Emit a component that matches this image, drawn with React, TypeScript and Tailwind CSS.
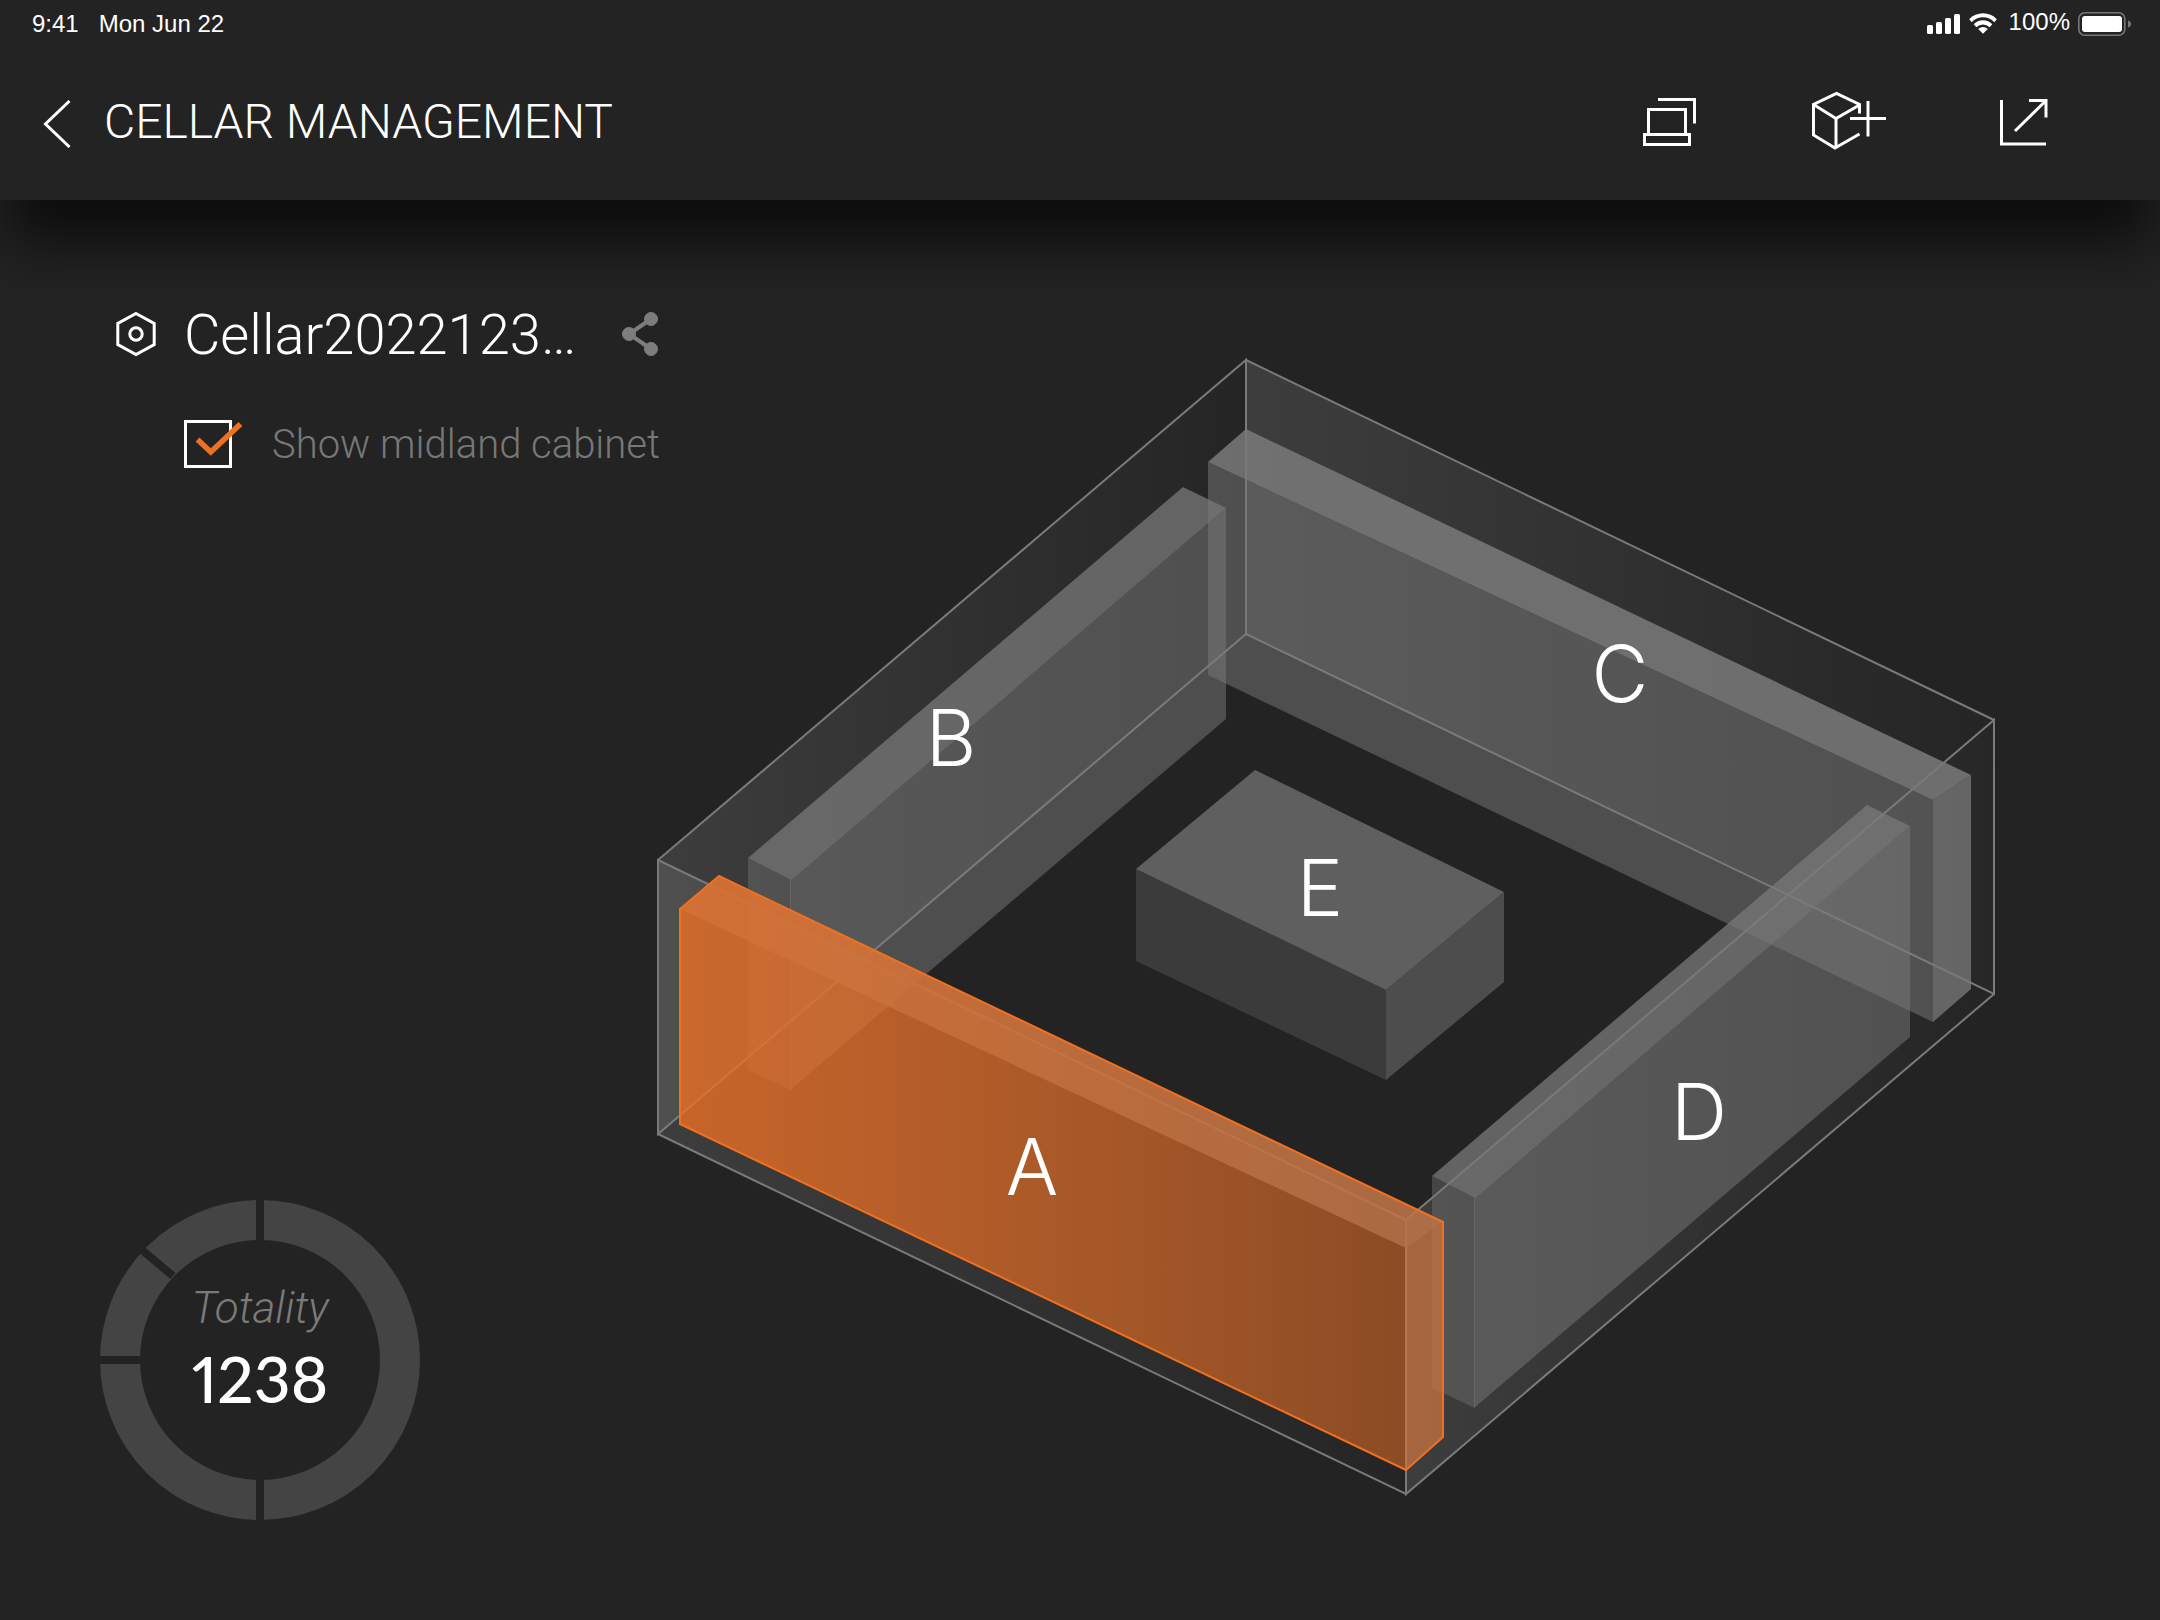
import { useState } from 'react';

type Face = { points: string; opacity: number };

interface Cabinet {
  id: string;
  outline: string;
  faces: Face[];
  label: [number, number];
}

// Drawn back to front
const cabinets: Cabinet[] = [
  {
    id: 'C',
    outline: '1208,462 1246,429 1971,775 1971,989 1933,1022 1208,675',
    faces: [
      { points: '1208,462 1933,800 1933,1022 1208,675', opacity: 0.5 },
      { points: '1208,462 1246,429 1971,775 1933,800', opacity: 0.87 },
      { points: '1933,800 1971,775 1971,989 1933,1022', opacity: 0.76 },
    ],
    label: [1620, 702],
  },
  {
    id: 'B',
    outline: '748,858 1183,487 1226,508 1226,719 791,1090 748,1070',
    faces: [
      { points: '748,858 791,880 791,1090 748,1070', opacity: 0.4 },
      { points: '790,880 1226,508 1226,719 790,1090', opacity: 0.5 },
      { points: '748,858 1183,487 1226,508 791,880', opacity: 0.74 },
    ],
    label: [951, 766],
  },
  {
    id: 'D',
    outline: '1432,1176 1867,805 1910,826 1910,1037 1475,1408 1432,1388',
    faces: [
      { points: '1432,1176 1475,1198 1475,1408 1432,1388', opacity: 0.4 },
      { points: '1474,1198 1910,826 1910,1037 1474,1408', opacity: 0.5 },
      { points: '1432,1176 1867,805 1910,826 1475,1198', opacity: 0.74 },
    ],
    label: [1699, 1140],
  },
  {
    id: 'A',
    outline: '680,909 719,876 1443,1222 1443,1437 1406,1470 680,1124',
    faces: [
      { points: '680,909 1406,1248 1406,1470 680,1124', opacity: 0.5 },
      { points: '680,909 719,876 1443,1222 1406,1248', opacity: 0.75 },
      { points: '1406,1248 1443,1222 1443,1437 1406,1470', opacity: 0.5 },
    ],
    label: [1032, 1195],
  },
];

const walls = [
  '658,860 1246,360 1246,634 658,1134',
  '1246,360 1994,720 1994,994 1246,634',
  '658,860 1406,1220 1406,1494 658,1134',
  '1406,1220 1994,720 1994,994 1406,1494',
];

const labelClass = "font-['Inter',sans-serif] text-[78px] font-light";

function StatusBar() {
  return (
    <div className="flex h-12 items-center justify-between pr-7 pl-8 font-['Liberation_Sans',sans-serif] text-2xl">
      <div className="flex gap-5">
        <span>9:41</span>
        <span>Mon Jun 22</span>
      </div>
      <div className="flex items-center">
        <svg className="h-6 w-[72px]" viewBox="0 0 72 24" fill="#fff">
          <rect x="0" y="13" width="6" height="9" rx="1.5" />
          <rect x="9" y="10" width="6" height="12" rx="1.5" />
          <rect x="18" y="6" width="6" height="16" rx="1.5" />
          <rect x="27" y="2" width="6" height="20" rx="1.5" />
          <path d="M42.2 7.2 A19 19 0 0 1 69.8 7.2 L67.3 10.2 A15.6 15.6 0 0 0 44.7 10.2 Z" />
          <path d="M46.7 12.2 A13 13 0 0 1 65.3 12.2 L62.6 15.2 A9.4 9.4 0 0 0 49.4 15.2 Z" />
          <path d="M51.2 17 A7 7 0 0 1 60.8 17 L56 21.8 Z" />
        </svg>
        <span className="ml-2.5 pb-1">100%</span>
        <svg className="ml-2 h-6 w-[54px]" viewBox="0 0 54 24">
          <rect x="0.8" y="0.8" width="46" height="22.4" rx="6" fill="none" stroke="#777" strokeWidth="1.6" />
          <rect x="4" y="4" width="40" height="16" rx="3" fill="#fff" />
          <path d="M50 8.5 Q53 9.5 53 12 Q53 14.5 50 15.5 Z" fill="#777" />
        </svg>
      </div>
    </div>
  );
}

function Header() {
  return (
    <header className="relative z-10 bg-[#232323] shadow-[0_50px_56px_-8px_rgba(0,0,0,0.66)]">
      <StatusBar />
      <div className="flex h-[152px] items-center justify-between pr-[108px] pl-10">
        <div className="flex items-center">
          <button type="button" aria-label="Back" className="cursor-pointer">
            <svg className="h-12 w-8" viewBox="0 0 32 48" fill="none" stroke="#fff" strokeWidth="3">
              <path d="M29.5 1 L5.5 24 L29.5 47" />
            </svg>
          </button>
          <h1 className="ml-8 pb-1 text-5xl font-light">CELLAR MANAGEMENT</h1>
        </div>
        <div className="flex items-center gap-[110px] pb-1.5">
          <button type="button" aria-label="Devices" className="cursor-pointer">
            <svg className="h-[60px] w-14" viewBox="0 0 56 60" fill="none" stroke="#fff" strokeWidth="3">
              <path d="M18 8.5 H54.5 V32.5" />
              <path d="M8.5 43 V18.5 H45.5 V43" />
              <rect x="4.5" y="43.5" width="45" height="10" />
            </svg>
          </button>
          <button type="button" aria-label="Add cabinet" className="cursor-pointer">
            <svg className="h-[60px] w-20" viewBox="0 0 80 60" fill="none" stroke="#fff" strokeWidth="3">
              <path d="M53.5 22.5 V13.5 L30.5 2.5 L7.5 13.5 V44 L29 57 L53.5 43" />
              <path d="M7.5 13.5 L30 27.5 L53.5 14" />
              <path d="M30 27.5 V57" />
              <path d="M44 27.5 H80" />
              <path d="M62 10 V45.5" />
            </svg>
          </button>
          <button type="button" aria-label="Export" className="cursor-pointer">
            <svg className="h-[60px] w-14" viewBox="0 0 56 60" fill="none" stroke="#fff" strokeWidth="3">
              <path d="M5.5 9 V53 H50" />
              <path d="M19 40 L50 9.5" />
              <path d="M33 9.5 H50 V26.5" />
            </svg>
          </button>
        </div>
      </div>
    </header>
  );
}

function TotalRing({ total }: { total: number }) {
  return (
    <div className="relative h-80 w-80">
      <svg className="h-full w-full" viewBox="0 0 320 320" fill="none">
        <circle cx="160" cy="160" r="140" stroke="#444" strokeWidth="40" />
        <g stroke="#232323" strokeWidth="8">
          <path d="M160 0 V44" />
          <path d="M160 276 V320" />
          <path d="M0 160 H44" />
          <path d="M73 76 L36 45" />
        </g>
      </svg>
      <div className="absolute inset-0 flex flex-col items-center pt-20">
        <span className="text-[44px] leading-14 font-light text-[#7a7a7a] italic">Totality</span>
        <span className="font-['Lato',sans-serif] text-[64px] leading-[86px] font-medium proportional-nums">
          {total}
        </span>
      </div>
    </div>
  );
}

function CellarDiagram({ showMidland }: { showMidland: boolean }) {
  const [selected, setSelected] = useState('A');

  return (
    <svg className="w-full" viewBox="656 356 1342 1142">
      <defs>
        <linearGradient id="wall">
          <stop offset="0" stopColor="#7a7a7a" stopOpacity="0.3" />
          <stop offset="1" stopColor="#7a7a7a" stopOpacity="0.02" />
        </linearGradient>
        <linearGradient id="active">
          <stop offset="0" stopColor="#ee7024" stopOpacity="0.78" />
          <stop offset="1" stopColor="#ee7024" stopOpacity="0.5" />
        </linearGradient>
      </defs>

      {walls.map((points) => (
        <polygon key={points} points={points} fill="url(#wall)" stroke="#7a7a7a" strokeWidth="2" />
      ))}

      {showMidland && (
        <g>
          <polygon points="1136,869 1386,990 1386,1080 1136,961" fill="#3b3b3b" />
          <polygon points="1386,990 1504,892 1504,982 1386,1080" fill="#4d4d4d" />
          <polygon points="1255,770 1504,892 1386,990 1136,869" fill="#5f5f5f" />
          <text x="1320" y="916" textAnchor="middle" fill="#fff" className={labelClass}>
            E
          </text>
        </g>
      )}

      {cabinets.map((cabinet) => {
        const active = cabinet.id === selected;
        const faces = active ? cabinet.faces.slice(1) : cabinet.faces;
        return (
          <g key={cabinet.id} className="cursor-pointer" onClick={() => setSelected(cabinet.id)}>
            {faces.map((face) => (
              <polygon key={face.points} points={face.points} fill="#797979" fillOpacity={face.opacity} />
            ))}
            {active && (
              <polygon points={cabinet.outline} fill="url(#active)" stroke="#f07022" strokeWidth="2" />
            )}
          </g>
        );
      })}

      {cabinets.map(({ id, label }) => (
        <text
          key={id}
          x={label[0]}
          y={label[1]}
          textAnchor="middle"
          fill="#fff"
          pointerEvents="none"
          className={labelClass}
        >
          {id}
        </text>
      ))}
    </svg>
  );
}

export default function App() {
  const [showMidland, setShowMidland] = useState(true);

  return (
    <div className="flex min-h-screen flex-col bg-[#232323] font-['Roboto',sans-serif] text-white">
      <Header />
      <main className="flex flex-1">
        <aside className="flex w-[660px] shrink-0 flex-col justify-between pt-[102px] pb-[100px] pl-[100px]">
          <div>
            <div className="flex h-16 items-center">
              <svg className="ml-4 h-12 w-10" viewBox="0 0 40 48" fill="none" stroke="#fff" strokeWidth="3">
                <path d="M20 3.5 L38.2 13.5 V34.5 L20 44.5 L1.8 34.5 V13.5 Z" />
                <circle cx="20" cy="24" r="6.2" />
              </svg>
              <h2 className="ml-7 pt-0.5 text-[56px] leading-16 font-light">Cellar2022123…</h2>
              <button type="button" aria-label="Share" className="ml-auto cursor-pointer">
                <svg className="h-12 w-10" viewBox="0 0 40 48" fill="#7d7d7d" stroke="#7d7d7d">
                  <path d="M31 9 L9 24 L31 39" fill="none" strokeWidth="4" />
                  <circle cx="31" cy="9" r="6.5" />
                  <circle cx="9" cy="24" r="6.5" />
                  <circle cx="31" cy="39" r="6.5" />
                </svg>
              </button>
            </div>
            <div className="mt-[54px] ml-[84px] flex h-12 items-center">
              <div className="relative h-12 w-12">
                <input
                  id="midland"
                  type="checkbox"
                  checked={showMidland}
                  onChange={(event) => setShowMidland(event.target.checked)}
                  className="block h-12 w-12 cursor-pointer appearance-none border-3 border-white"
                />
                {showMidland && (
                  <svg
                    className="pointer-events-none absolute top-0 left-0 h-12 w-[60px]"
                    viewBox="0 0 60 48"
                    fill="none"
                    stroke="#ee7024"
                    strokeWidth="5.5"
                  >
                    <path d="M13.5 19.5 L26.8 32 L56.5 4" />
                  </svg>
                )}
              </div>
              <label
                htmlFor="midland"
                className="ml-10 cursor-pointer pt-0.5 text-[40px] font-light whitespace-nowrap text-[#777]"
              >
                Show midland cabinet
              </label>
            </div>
          </div>
          <TotalRing total={1238} />
        </aside>
        <section className="-ml-1 flex-1 pt-[156px] pr-[162px]">
          <CellarDiagram showMidland={showMidland} />
        </section>
      </main>
    </div>
  );
}
